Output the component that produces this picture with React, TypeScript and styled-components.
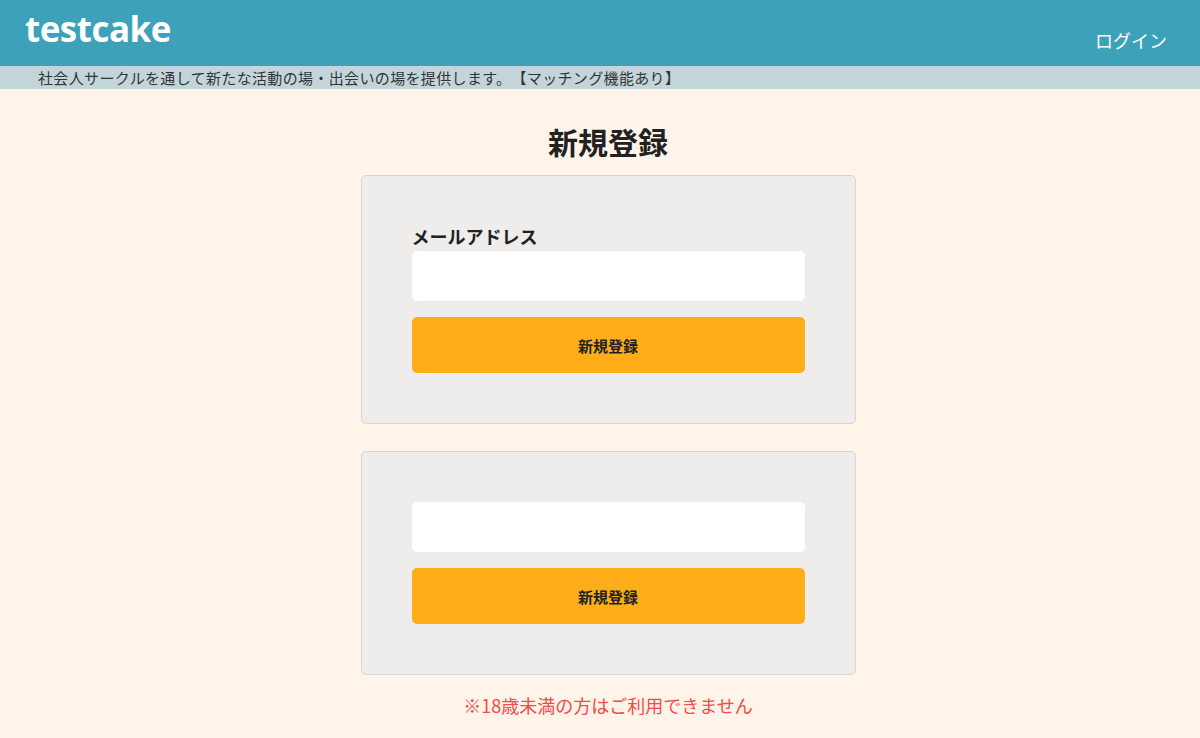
import React from 'react';
import styled, { createGlobalStyle } from 'styled-components';

const GlobalStyle = createGlobalStyle`
  body {
    margin: 0;
    background-color: #fef4e9;
    font-family: "Noto Sans CJK JP", "Noto Sans", sans-serif;
    color: #222;
    text-spacing-trim: space-all;
  }
`;

const Header = styled.header`
  height: 66px;
  background-color: #3ca1b9;
  display: flex;
  justify-content: space-between;
  padding: 0 33px 0 25px;
`;

const Logo = styled.h1`
  margin: 0;
  font-family: "Open Sans", "Noto Sans", sans-serif;
  font-weight: 700;
  font-size: 35px;
  line-height: 58px;
  color: #ffffff;
  letter-spacing: -0.5px;
`;

const LoginLink = styled.a`
  align-self: flex-end;
  margin-bottom: 14px;
  font-size: 18px;
  line-height: 24px;
  color: #ffffff;
  text-decoration: none;
  cursor: pointer;
`;

const SubBar = styled.div`
  height: 23px;
  background-color: #c2d6d9;
  padding-left: 38px;
  font-size: 15px;
  line-height: 23px;
  letter-spacing: 0.35px;
  color: #333;
`;

const Main = styled.main`
  display: flex;
  flex-direction: column;
  align-items: center;
  padding: 32px 0 0 16px;
`;

const Title = styled.h2`
  margin: 0 0 14px;
  font-size: 30px;
  line-height: 40px;
  font-weight: 700;
  color: #222;
`;

const CardStack = styled.div`
  display: flex;
  flex-direction: column;
  gap: 27px;
`;

const Card = styled.div`
  width: 393px;
  padding: 50px 50px 50px 50px;
  background-color: #eeedec;
  border: 1px solid #d6d6d6;
  border-radius: 5px;
  display: flex;
  flex-direction: column;
`;

const Label = styled.label`
  font-size: 18px;
  line-height: 20px;
  margin-bottom: 5px;
  font-weight: 700;
  color: #222;
`;

const Input = styled.input`
  height: 50px;
  box-sizing: border-box;
  border: none;
  border-radius: 5px;
  background-color: #ffffff;
  padding: 0 12px;
  font-size: 16px;
  margin-bottom: 16px;
  outline: none;
`;

const SubmitButton = styled.button`
  height: 56px;
  border: none;
  border-radius: 5px;
  background-color: #ffae19;
  font-family: "Noto Sans CJK JP", "Noto Sans", sans-serif;
  font-size: 15px;
  font-weight: 700;
  color: #222;
  cursor: pointer;
`;

const Notice = styled.p`
  margin: 18px 0 0;
  font-size: 18px;
  line-height: 24px;
  color: #f44a4a;
`;

const App: React.FC = () => {
  return (
    <>
      <GlobalStyle />
      <Header>
        <Logo>testcake</Logo>
        <LoginLink>ログイン</LoginLink>
      </Header>
      <SubBar>社会人サークルを通して新たな活動の場・出会いの場を提供します。【マッチング機能あり】</SubBar>
      <Main>
        <Title>新規登録</Title>
        <CardStack>
          <Card>
            <Label htmlFor="email">メールアドレス</Label>
            <Input id="email" type="email" />
            <SubmitButton type="button">新規登録</SubmitButton>
          </Card>
          <Card>
            <Input type="text" />
            <SubmitButton type="button">新規登録</SubmitButton>
          </Card>
        </CardStack>
        <Notice>※18歳未満の方はご利用できません</Notice>
      </Main>
    </>
  );
};

export default App;
